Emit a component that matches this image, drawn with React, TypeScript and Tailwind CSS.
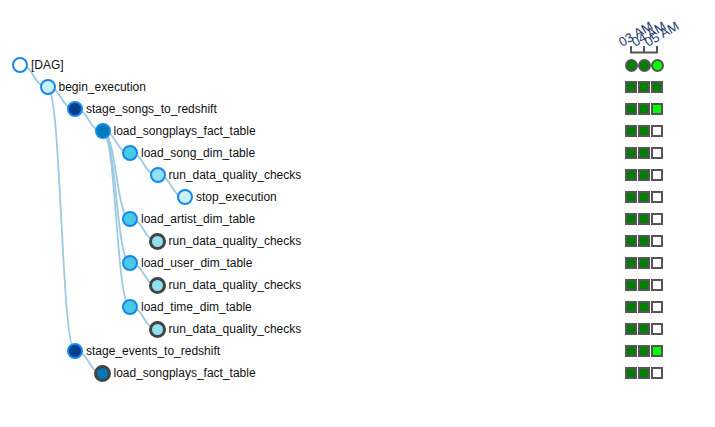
import React from "react";

type State = "g" | "l" | "w";
type Row = {
  label: string;
  depth: number;
  fill: string;
  gray?: boolean;
  states: State[];
};

const rows: Row[] = [
  { label: "[DAG]", depth: 0, fill: "bg-white", states: [] },
  { label: "begin_execution", depth: 1, fill: "bg-[#caf0f8]", states: ["g", "g", "g"] },
  { label: "stage_songs_to_redshift", depth: 2, fill: "bg-[#023e8a]", states: ["g", "g", "l"] },
  { label: "load_songplays_fact_table", depth: 3, fill: "bg-[#0077b6]", states: ["g", "g", "w"] },
  { label: "load_song_dim_table", depth: 4, fill: "bg-[#48cae4]", states: ["g", "g", "w"] },
  { label: "run_data_quality_checks", depth: 5, fill: "bg-[#90e0ef]", states: ["g", "g", "w"] },
  { label: "stop_execution", depth: 6, fill: "bg-[#caf0f8]", states: ["g", "g", "w"] },
  { label: "load_artist_dim_table", depth: 4, fill: "bg-[#48cae4]", states: ["g", "g", "w"] },
  { label: "run_data_quality_checks", depth: 5, fill: "bg-[#90e0ef]", gray: true, states: ["g", "g", "w"] },
  { label: "load_user_dim_table", depth: 4, fill: "bg-[#48cae4]", states: ["g", "g", "w"] },
  { label: "run_data_quality_checks", depth: 5, fill: "bg-[#90e0ef]", gray: true, states: ["g", "g", "w"] },
  { label: "load_time_dim_table", depth: 4, fill: "bg-[#48cae4]", states: ["g", "g", "w"] },
  { label: "run_data_quality_checks", depth: 5, fill: "bg-[#90e0ef]", gray: true, states: ["g", "g", "w"] },
  { label: "stage_events_to_redshift", depth: 2, fill: "bg-[#023e8a]", states: ["g", "g", "l"] },
  { label: "load_songplays_fact_table", depth: 3, fill: "bg-[#0077b6]", gray: true, states: ["g", "g", "w"] },
];

// parent index -> child index
const links: [number, number][] = [
  [0, 1],
  [1, 2],
  [1, 13],
  [2, 3],
  [3, 4],
  [3, 7],
  [3, 9],
  [3, 11],
  [4, 5],
  [5, 6],
  [7, 8],
  [9, 10],
  [11, 12],
  [13, 14],
];

const indent = [
  "w-[12.5px]",
  "w-[40px]",
  "w-[67.5px]",
  "w-[95px]",
  "w-[122.5px]",
  "w-[150px]",
  "w-[177.5px]",
];

const stateBg: Record<State, string> = {
  g: "bg-[#008000]",
  l: "bg-[#00ff00]",
  w: "bg-white",
};

const nodeX = (d: number) => 20 + 27.5 * d;
const nodeY = (i: number) => 65 + 22 * i;

function diagonal(a: number, b: number) {
  const sx = nodeX(rows[a].depth);
  const sy = nodeY(a);
  const tx = nodeX(rows[b].depth);
  const ty = nodeY(b);
  const mx = (sx + tx) / 2;
  return `M${sx},${sy}C${mx},${sy} ${mx},${ty} ${tx},${ty}`;
}

function Node({ row }: { row: Row }) {
  return (
    <div className="flex h-[15px] w-[15px] shrink-0 items-center justify-center">
      {row.gray ? (
        <div className={`h-[17px] w-[17px] shrink-0 rounded-full border-[3px] border-[#444] ${row.fill}`} />
      ) : (
        <div className={`h-[16px] w-[16px] shrink-0 rounded-full border-2 border-[#1787f0] ${row.fill}`} />
      )}
    </div>
  );
}

export default function App() {
  const times = ["03 AM", "04 AM", "05 AM"];
  return (
    <div className="relative h-[427px] w-[715px] overflow-hidden bg-white font-['Liberation_Sans',Arial,sans-serif]">
      <svg className="pointer-events-none absolute left-0 top-0" width={715} height={427}>
        {links.map(([a, b], k) => (
          <path key={k} d={diagonal(a, b)} fill="none" stroke="#9ecae1" strokeWidth={1.8} />
        ))}
      </svg>
      <div className="relative flex flex-col">
        <div className="flex h-[54px]">
          <div className="w-[625px] shrink-0" />
          <svg width={70} height={54} className="overflow-visible">
            {times.map((t, i) => {
              const x = 6 + 13 * i - 9;
              const y = 47;
              return (
                <text
                  key={t}
                  x={x}
                  y={y}
                  transform={`rotate(-30 ${x} ${y})`}
                  fontSize={13}
                  fill="#233a6e"
                  fontFamily="'Liberation Sans', Arial, sans-serif"
                >
                  {t}
                </text>
              );
            })}
            <path
              d="M6,52.5H32M6,46V53.5M19,46V53.5M32,46V53.5"
              fill="none"
              stroke="#555"
              strokeWidth={2}
            />
          </svg>
        </div>
        {rows.map((row, i) => (
          <div key={i} className="flex h-[22px] items-center">
            <div className="flex w-[625px] shrink-0 items-center">
              <div className={`shrink-0 ${indent[row.depth]}`} />
              <Node row={row} />
              <span className="ml-[3.5px] whitespace-nowrap text-[12px] leading-[22px] text-[#111]">
                {row.label}
              </span>
            </div>
            {i === 0 ? (
              <div className="-ml-[0.5px] flex">
                <div className="h-[13px] w-[13px] rounded-full border-2 border-[#555] bg-[#008000]" />
                <div className="h-[13px] w-[13px] rounded-full border-2 border-[#555] bg-[#008000]" />
                <div className="h-[13px] w-[13px] rounded-full border-2 border-[#555] bg-[#00ff00]" />
              </div>
            ) : (
              <div className="flex gap-px">
                {row.states.map((s, j) => (
                  <div key={j} className={`h-3 w-3 border-2 border-[#555] ${stateBg[s]}`} />
                ))}
              </div>
            )}
          </div>
        ))}
      </div>
    </div>
  );
}
